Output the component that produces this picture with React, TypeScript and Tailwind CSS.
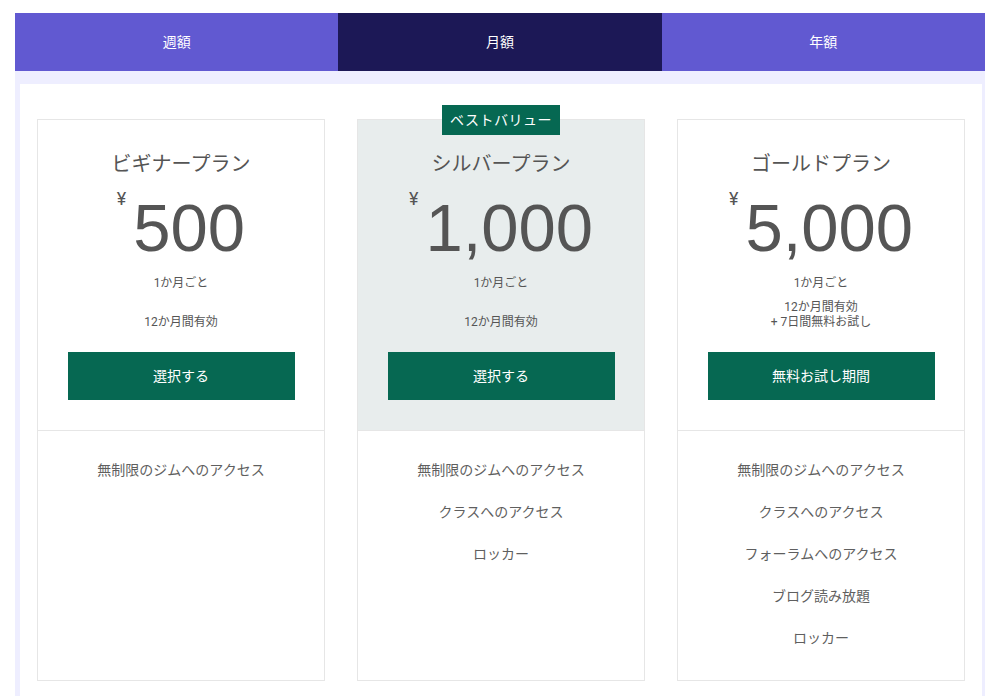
import React from "react";

type Plan = {
  name: string;
  price: string;
  note: string[];
  button: string;
  features: string[];
  featured?: boolean;
};

const plans: Plan[] = [
  {
    name: "ビギナープラン",
    price: "500",
    note: ["12か月間有効"],
    button: "選択する",
    features: ["無制限のジムへのアクセス"],
  },
  {
    name: "シルバープラン",
    price: "1,000",
    note: ["12か月間有効"],
    button: "選択する",
    features: ["無制限のジムへのアクセス", "クラスへのアクセス", "ロッカー"],
    featured: true,
  },
  {
    name: "ゴールドプラン",
    price: "5,000",
    note: ["12か月間有効", "+ 7日間無料お試し"],
    button: "無料お試し期間",
    features: [
      "無制限のジムへのアクセス",
      "クラスへのアクセス",
      "フォーラムへのアクセス",
      "ブログ読み放題",
      "ロッカー",
    ],
  },
];

function Card({ plan }: { plan: Plan }) {
  return (
    <div className="relative flex flex-col border border-[#e6e6e6] bg-white">
      {plan.featured && (
        <div className="absolute left-1/2 top-[-15px] flex h-[30px] w-[118px] -translate-x-1/2 items-center justify-center bg-[#066852] pt-[1px] text-[14px] tracking-[0.5px] text-white">
          ベストバリュー
        </div>
      )}
      <div
        className={
          "flex h-[310px] flex-col items-center pt-[30px] " +
          (plan.featured ? "bg-[#e8eded]" : "bg-white")
        }
      >
        <div className="h-[28px] text-[20px] leading-[28px] text-[#555]">{plan.name}</div>
        <div className="mt-[10px] flex h-[74px] items-start justify-center">
          <span className="mr-[7px] mt-[2px] text-[18px] leading-[18px] text-[#555]">¥</span>
          <span className="mt-[6px] font-['Liberation_Sans'] text-[67px] leading-[68px] text-[#555]">
            {plan.price}
          </span>
        </div>
        <div className="mt-[12px] h-[18px] text-[12px] leading-[18px] text-[#555]">1か月ごと</div>
        <div className="mt-[8px] flex h-[30px] flex-col items-center justify-end text-[12px] leading-[15px] text-[#555]">
          {plan.note.map((n) => (
            <div key={n}>{n}</div>
          ))}
        </div>
        <button className="mt-[22px] flex h-[48px] w-[227px] items-center justify-center bg-[#066852] text-[14px] text-white">
          {plan.button}
        </button>
      </div>
      <div className="flex flex-1 flex-col border-t border-[#e6e6e6] pb-[21px] pt-[18px]">
        {plan.features.map((f) => (
          <div key={f} className="flex h-[42px] items-center justify-center text-[14px] text-[#5f5f5f]">
            {f}
          </div>
        ))}
      </div>
    </div>
  );
}

export default function App() {
  const tabs = [
    { label: "週額", active: false },
    { label: "月額", active: true },
    { label: "年額", active: false },
  ];
  return (
    <div className="min-h-[696px] bg-white px-[15px] pt-[13px] font-['Roboto','Noto_Sans_CJK_JP',sans-serif]">
      <div className="flex h-[58px]">
        {tabs.map((t) => (
          <div
            key={t.label}
            className={
              "flex flex-1 items-center justify-center pt-[1px] text-[14px] text-white " +
              (t.active ? "bg-[#1c1856]" : "bg-[#6159d1]")
            }
          >
            {t.label}
          </div>
        ))}
      </div>
      <div className="bg-[#eeeeff] pl-[5px] pr-[3px] pt-[13px]">
        <div className="bg-white px-[17px] pb-[40px] pt-[35px]">
          <div className="grid grid-cols-3 gap-[32px]">
            {plans.map((p) => (
              <Card key={p.name} plan={p} />
            ))}
          </div>
        </div>
      </div>
    </div>
  );
}
